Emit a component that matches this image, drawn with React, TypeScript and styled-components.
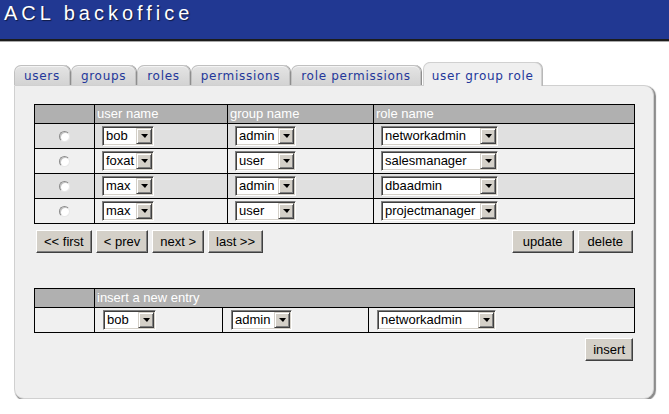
import styled, { createGlobalStyle } from "styled-components";

const GlobalStyle = createGlobalStyle`
  body {
    margin: 0;
    background: #ffffff;
    font-family: "Liberation Sans", Arial, sans-serif;
  }
`;

const tabs = [
  "users",
  "groups",
  "roles",
  "permissions",
  "role permissions",
  "user group role",
];

const rows = [
  { user: "bob", group: "admin", role: "networkadmin" },
  { user: "foxat", group: "user", role: "salesmanager" },
  { user: "max", group: "admin", role: "dbaadmin" },
  { user: "max", group: "user", role: "projectmanager" },
];

const Select = ({ value, width }: { value: string; width: number }) => (
  <SelectBox $w={width}>
    <SelectText>{value}</SelectText>
    <SelectArrow />
  </SelectBox>
);

export default function App() {
  return (
    <>
      <GlobalStyle />
      <Header>
        <Title>ACL backoffice</Title>
      </Header>
      <TabBar>
        {tabs.map((t) => (
          <Tab key={t} $active={t === "user group role"}>
            {t}
          </Tab>
        ))}
      </TabBar>
      <Panel>
        <Grid>
          <colgroup>
            <Col $w={60} />
            <Col $w={133} />
            <Col $w={146} />
            <Col $w={261} />
          </colgroup>
          <thead>
            <tr>
              <Th></Th>
              <Th>user name</Th>
              <Th>group name</Th>
              <Th>role name</Th>
            </tr>
          </thead>
          <tbody>
            {rows.map((r, i) => (
              <Row key={i} $odd={i % 2 === 0}>
                <RadioCell>
                  <Radio />
                </RadioCell>
                <Td>
                  <Select value={r.user} width={52} />
                </Td>
                <Td>
                  <Select value={r.group} width={61} />
                </Td>
                <Td>
                  <Select value={r.role} width={117} />
                </Td>
              </Row>
            ))}
          </tbody>
        </Grid>

        <ButtonRow>
          <ButtonGroup>
            <Button $pad={7}>&lt;&lt; first</Button>
            <Button $pad={7}>&lt; prev</Button>
            <Button $pad={7}>next &gt;</Button>
            <Button $pad={7}>last &gt;&gt;</Button>
          </ButtonGroup>
          <ButtonGroup>
            <Button $pad={10}>update</Button>
            <Button $pad={9}>delete</Button>
          </ButtonGroup>
        </ButtonRow>

        <InsertGrid>
          <colgroup>
            <Col $w={60} />
            <Col $w={128} />
            <Col $w={146} />
            <Col $w={266} />
          </colgroup>
          <thead>
            <tr>
              <Th></Th>
              <Th colSpan={3}>insert a new entry</Th>
            </tr>
          </thead>
          <tbody>
            <Row $odd={false}>
              <Td></Td>
              <InsertTd>
                <Select value="bob" width={53} />
              </InsertTd>
              <InsertTd>
                <Select value="admin" width={61} />
              </InsertTd>
              <InsertTd>
                <Select value="networkadmin" width={119} />
              </InsertTd>
            </Row>
          </tbody>
        </InsertGrid>

        <InsertRow>
          <Button $pad={7}>insert</Button>
        </InsertRow>
      </Panel>
    </>
  );
}

const Header = styled.header`
  height: 39px;
  background: #213892;
  border-bottom: 2px solid #1c1c1c;
  box-shadow: 0 1px 0 #a8a8a8;
  display: flex;
  align-items: flex-start;
`;

const Title = styled.h1`
  margin: 0;
  padding: 1px 0 0 4px;
  font-family: "Liberation Sans", Arial, sans-serif;
  font-weight: normal;
  font-size: 20px;
  line-height: 24px;
  letter-spacing: 4px;
  color: #ffffff;
  text-shadow: 1px 1px 1px rgba(0, 0, 0, 0.55);
`;

const TabBar = styled.nav`
  display: flex;
  align-items: flex-end;
  gap: 1px;
  margin-top: 21px;
  padding-left: 14px;
  position: relative;
  z-index: 1;
`;

const Tab = styled.div<{ $active?: boolean }>`
  box-sizing: border-box;
  height: ${(p) => (p.$active ? "24px" : "20px")};
  margin-bottom: ${(p) => (p.$active ? "-1px" : "0")};
  margin-left: ${(p) => (p.$active ? "1px" : "0")};
  padding: ${(p) => (p.$active ? "5px 7px 0 8px" : "2px 9px 0")};
  font-family: "DejaVu Sans", Verdana, sans-serif;
  font-size: 12px;
  line-height: 17px;
  letter-spacing: 0.7px;
  color: #23379a;
  background: ${(p) =>
    p.$active ? "#efefef" : "linear-gradient(#e4e4e4, #d3d3d3)"};
  border: 1px solid ${(p) => (p.$active ? "#d0d0d0" : "#c0c0c0")};
  border-bottom: none;
  border-radius: 7px 7px 0 0;
  box-shadow: ${(p) =>
    p.$active ? "1px 0 0 #b8b8b8" : "1px 0 0 #8e8e8e, inset 0 1px 0 #f4f4f4"};
  white-space: nowrap;
`;

const Panel = styled.main`
  box-sizing: border-box;
  margin-left: 14px;
  width: 640px;
  height: 314px;
  background: #efefef;
  border: 1px solid #d0d0d0;
  border-radius: 0 10px 10px 10px;
  box-shadow: 1px 2px 1px #8c8c8c, 2px 1px 1px #8c8c8c;
  padding: 18px 0 0 19px;
`;

const Grid = styled.table`
  width: 600px;
  border-collapse: collapse;
  table-layout: fixed;
  border: 1px solid #000;
`;

const InsertGrid = styled(Grid)`
  margin-top: 35px;
`;

const Col = styled.col<{ $w: number }>`
  width: ${(p) => p.$w}px;
`;

const Th = styled.th`
  height: 18px;
  padding: 0 0 0 2px;
  background: #b0b0b0;
  border: 1px solid #000;
  color: #ffffff;
  font-family: "Liberation Sans", Arial, sans-serif;
  font-weight: normal;
  font-size: 13px;
  line-height: 16px;
  text-align: left;
`;

const Row = styled.tr<{ $odd: boolean }>`
  background: ${(p) => (p.$odd ? "#e0e0e0" : "#f0f0f0")};
`;

const Td = styled.td`
  box-sizing: border-box;
  height: 25px;
  padding: 2px 0 0 7px;
  border: 1px solid #000;
  vertical-align: top;
`;

const InsertTd = styled(Td)`
  padding-left: 8px;
`;

const RadioCell = styled.td`
  border: 1px solid #000;
  text-align: center;
  vertical-align: middle;
  padding: 0;
`;

const Radio = styled.span`
  display: inline-block;
  box-sizing: border-box;
  width: 11px;
  height: 11px;
  border-radius: 50%;
  background: #ffffff;
  border: 1px solid;
  border-color: #8a8a8a #e8e8e8 #e8e8e8 #8a8a8a;
  box-shadow: inset 1px 1px 0 #c4c4c4;
  vertical-align: middle;
  margin-top: -1px;
`;

const SelectBox = styled.div<{ $w: number }>`
  display: flex;
  box-sizing: border-box;
  width: ${(p) => p.$w}px;
  height: 20px;
  background: #ffffff;
  border: 1px solid;
  border-color: #808080 #ffffff #ffffff #808080;
  box-shadow: inset 1px 1px 0 #404040, inset -1px -1px 0 #d4d0c8;
`;

const SelectText = styled.span`
  flex: 1;
  padding-left: 3px;
  font-family: "Liberation Sans", Arial, sans-serif;
  font-size: 13px;
  line-height: 18px;
  color: #000;
  white-space: nowrap;
  overflow: hidden;
`;

const SelectArrow = styled.span`
  box-sizing: border-box;
  flex: none;
  width: 16px;
  height: 16px;
  margin: 1px 1px 0 0;
  background: #d4d0c8;
  border: 1px solid;
  border-color: #d4d0c8 #404040 #404040 #d4d0c8;
  box-shadow: inset 1px 1px 0 #ffffff, inset -1px -1px 0 #808080;
  display: flex;
  align-items: center;
  justify-content: center;

  &::after {
    content: "";
    border-left: 4px solid transparent;
    border-right: 3px solid transparent;
    border-top: 4px solid #000;
  }
`;

const ButtonRow = styled.div`
  display: flex;
  justify-content: space-between;
  width: 597px;
  margin: 6px 0 0 2px;
`;

const ButtonGroup = styled.div`
  display: flex;
  gap: 4px;
`;

const Button = styled.button<{ $pad: number }>`
  box-sizing: border-box;
  height: 23px;
  padding: 0 ${(p) => p.$pad}px;
  background: #d4d0c8;
  border: 1px solid;
  border-color: #ffffff #404040 #404040 #ffffff;
  box-shadow: inset -1px -1px 0 #808080;
  font-family: "Liberation Sans", Arial, sans-serif;
  font-size: 13px;
  color: #000;
  border-radius: 0;
`;

const InsertRow = styled.div`
  display: flex;
  justify-content: flex-end;
  width: 599px;
  margin-top: 5px;
`;
